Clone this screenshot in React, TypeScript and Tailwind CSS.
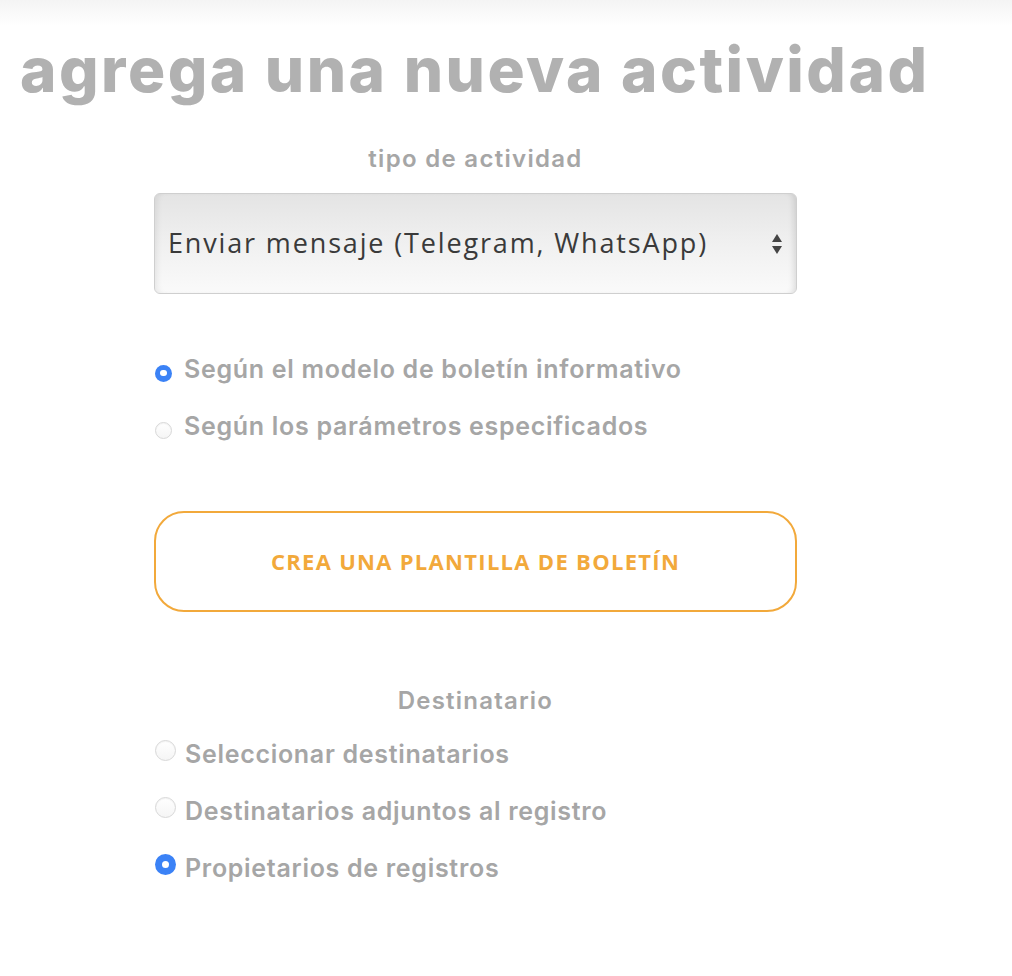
import React from "react";

function Radio({ checked, size = 14, className = "" }: { checked?: boolean; size?: number; className?: string }) {
  if (checked) {
    return (
      <span
        className={"flex shrink-0 items-center justify-center rounded-full bg-[#3b82f6] " + className}
        style={{ width: size, height: size }}
      >
        <span className="block rounded-full bg-white" style={{ width: size * 0.38, height: size * 0.38 }} />
      </span>
    );
  }
  return (
    <span
      className={"block shrink-0 rounded-full border border-[#d8d8d8] bg-gradient-to-b from-white to-[#f5f5f5] shadow-[inset_0_1px_1px_rgba(0,0,0,0.05)] " + className}
      style={{ width: size, height: size }}
    />
  );
}

const labelFont = { fontFamily: 'Inter, "Liberation Sans", sans-serif' };

export default function App() {
  return (
    <div className="min-h-[976px] w-[1012px] bg-white" style={{ fontFamily: '"Liberation Sans", Arial, sans-serif' }}>
      <div className="h-[26px] bg-gradient-to-b from-[#f4f4f4] to-white" />
      <h1
        className="ml-[20px] mt-[14px] h-[60px] text-[62px] font-extrabold leading-[60px] tracking-[2.5px] text-[#b1b1b1]"
        style={labelFont}
      >
        agrega una nueva actividad
      </h1>
      <div className="ml-[154px] w-[643px]">
        <div className="mt-[44px] text-center text-[24px] font-semibold leading-[30px] tracking-[1.3px] text-[#a6a6a6]" style={labelFont}>
          tipo de actividad
        </div>
        <div className="mt-[19px] flex h-[101px] items-center justify-between rounded-[6px] border border-[#cfcfcf] bg-gradient-to-b from-[#e4e4e4] via-[#f0f0f0] to-[#fafafa] pl-[13px] pr-[12px] shadow-[inset_-6px_0_6px_-4px_rgba(0,0,0,0.12),inset_6px_0_6px_-4px_rgba(0,0,0,0.08)]">
          <span className="text-[27px] tracking-[1.85px] text-[#3a3a3a]" style={{ fontFamily: '"Open Sans", sans-serif' }}>
            Enviar mensaje (Telegram, WhatsApp)
          </span>
          <svg width="12" height="24" viewBox="0 0 12 24" className="mr-[1px]">
            <path d="M6 2 L11 10 L1 10 Z" fill="#444" />
            <path d="M1 14 L11 14 L6 22 Z" fill="#444" />
          </svg>
        </div>
        <div className="mt-[60px] flex flex-col gap-[27px] text-[25px] font-semibold tracking-[0.7px] text-[#a6a6a6]" style={labelFont}>
          <label className="flex h-[30px] items-center gap-[12px] pl-[1px]">
            <Radio checked size={17} className="mt-[8px]" />
            <span className="leading-[30px]">Según el modelo de boletín informativo</span>
          </label>
          <label className="flex h-[30px] items-center gap-[12px] pl-[1px]">
            <Radio size={17} className="mt-[8px]" />
            <span className="leading-[30px]">Según los parámetros especificados</span>
          </label>
        </div>
        <button className="mt-[70px] flex h-[101px] w-full items-center justify-center rounded-[30px] border-2 border-[#f2a93b] bg-white text-[22px] font-bold tracking-[1.3px] text-[#f2a93b]" style={{ fontFamily: '"Open Sans", sans-serif' }}>
          CREA UNA PLANTILLA DE BOLETÍN
        </button>
        <div className="mt-[74px] text-center text-[24px] font-semibold leading-[30px] tracking-[1.2px] text-[#a6a6a6]" style={labelFont}>
          Destinatario
        </div>
        <div className="mt-[23px] flex flex-col gap-[27px] text-[25px] font-semibold tracking-[0.7px] text-[#a6a6a6]" style={labelFont}>
          <label className="flex h-[30px] items-center gap-[9px] pl-[1px]">
            <Radio size={21} className="-mt-[7px]" />
            <span className="leading-[30px]">Seleccionar destinatarios</span>
          </label>
          <label className="flex h-[30px] items-center gap-[9px] pl-[1px]">
            <Radio size={21} className="-mt-[7px]" />
            <span className="leading-[30px]">Destinatarios adjuntos al registro</span>
          </label>
          <label className="flex h-[30px] items-center gap-[9px] pl-[1px]">
            <Radio checked size={21} className="-mt-[7px]" />
            <span className="leading-[30px]">Propietarios de registros</span>
          </label>
        </div>
      </div>
    </div>
  );
}
